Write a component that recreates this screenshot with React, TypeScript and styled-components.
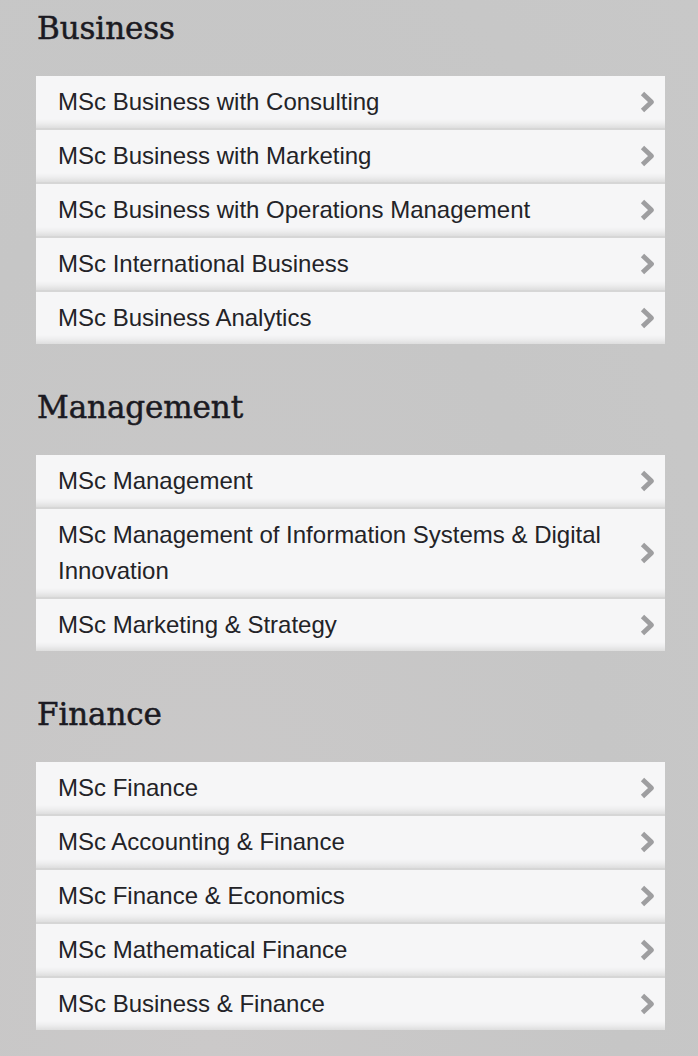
import React from "react";
import styled, { createGlobalStyle } from "styled-components";

const GlobalStyle = createGlobalStyle`
  html, body {
    margin: 0;
    padding: 0;
  }
  body {
    background: #c8c8c8;
    background-image: radial-gradient(ellipse at 30% 100%, #cbc9c9 0%, #c6c6c6 60%, #c8c8c8 100%);
    min-height: 1056px;
  }
`;

const Page = styled.main`
  box-sizing: border-box;
  width: 698px;
  min-height: 1056px;
  padding: 10px 33px 24px 36px;
  display: flex;
  flex-direction: column;
  gap: 45px;
`;

const Section = styled.section`
  display: flex;
  flex-direction: column;
`;

const Heading = styled.h2`
  margin: 0 0 30px 1px;
  font-family: "DejaVu Serif", "Liberation Serif", serif;
  font-weight: 400;
  font-size: 31px;
  line-height: 36px;
  color: #1b1a22;
  letter-spacing: -0.1px;
  -webkit-text-stroke: 0.5px #1b1a22;
`;

const List = styled.ul`
  list-style: none;
  margin: 0;
  padding: 0;
  display: flex;
  flex-direction: column;
  gap: 2px;
  background: #d6d6d6;
`;

const Row = styled.li`
  box-sizing: border-box;
  display: flex;
  align-items: center;
  gap: 14px;
  padding: 8px 8px 8px 22px;
  background: linear-gradient(
    to bottom,
    #f6f6f7 0%,
    #f6f6f7 calc(100% - 9px),
    #eeeeef calc(100% - 5px),
    #dedede 100%
  );
  cursor: pointer;
`;

const Label = styled.span`
  flex: 1;
  font-family: "Liberation Sans", Arial, sans-serif;
  font-size: 24px;
  line-height: 36px;
  color: #232327;
`;

const Chevron = styled.svg`
  flex: none;
  width: 19px;
  height: 24px;
  margin-top: -1px;
`;

const ChevronIcon = () => (
  <Chevron viewBox="0 0 19 24" aria-hidden="true">
    <path
      d="M4.5 3.5 L13.5 12 L4.5 20.5"
      fill="none"
      stroke="#9e9ea0"
      strokeWidth="4.8"
      strokeLinejoin="round"
    />
  </Chevron>
);

const sections: { title: string; items: string[] }[] = [
  {
    title: "Business",
    items: [
      "MSc Business with Consulting",
      "MSc Business with Marketing",
      "MSc Business with Operations Management",
      "MSc International Business",
      "MSc Business Analytics",
    ],
  },
  {
    title: "Management",
    items: [
      "MSc Management",
      "MSc Management of Information Systems & Digital Innovation",
      "MSc Marketing & Strategy",
    ],
  },
  {
    title: "Finance",
    items: [
      "MSc Finance",
      "MSc Accounting & Finance",
      "MSc Finance & Economics",
      "MSc Mathematical Finance",
      "MSc Business & Finance",
    ],
  },
];

export default function App() {
  return (
    <>
      <GlobalStyle />
      <Page>
        {sections.map((s) => (
          <Section key={s.title}>
            <Heading>{s.title}</Heading>
            <List>
              {s.items.map((item) => (
                <Row key={item}>
                  <Label>{item}</Label>
                  <ChevronIcon />
                </Row>
              ))}
            </List>
          </Section>
        ))}
      </Page>
    </>
  );
}
